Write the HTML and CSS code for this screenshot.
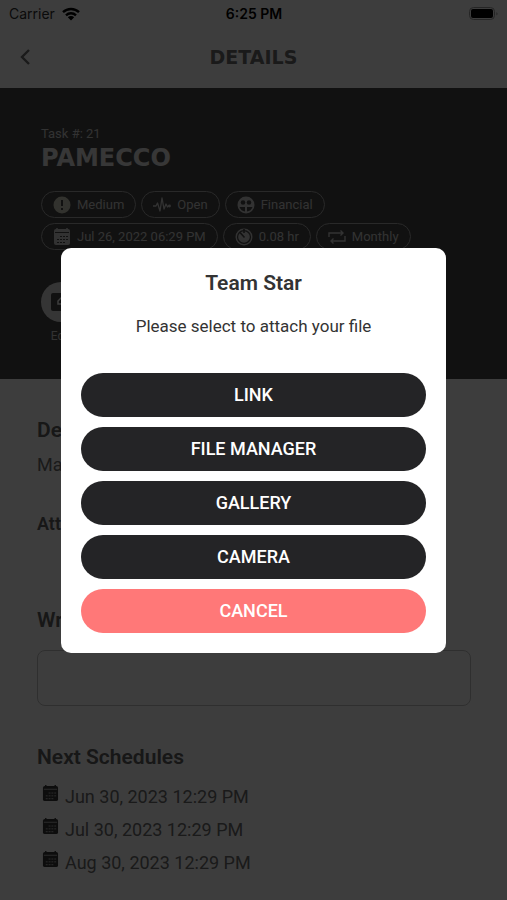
FILE: index.html
```
<!DOCTYPE html>
<html lang="en">
    <head>
        <meta charset="UTF-8" />
        <meta name="viewport" content="width=device-width, initial-scale=1.0" />
        <title>Details</title>
        <link rel="stylesheet" href="styles.css">
    </head>
    <body>
        <!-- Shared icons -->
        <svg class="sprite" width="0" height="0">
            <symbol id="calendar" viewBox="0 0 18 18">
                <path d="M3 1h12a2 2 0 0 1 2 2v12a2 2 0 0 1-2 2H3a2 2 0 0 1-2-2V3a2 2 0 0 1 2-2z" fill="currentColor" />
                <path d="M4 0v2M14 0v2" stroke="currentColor" stroke-width="1.500" />
                <path d="M2 4.500h14" class="icon-cut" />
                <path d="M7 8.500h8M4 11.500h11M4 14.500h8" class="icon-cut" stroke-dasharray="2 1" />
            </symbol>
        </svg>
        <!-- Status bar -->
        <div class="status">
            <div class="carrier">
                <span>Carrier</span>
                <svg width="18" height="14" viewBox="0 0 18 14">
                    <path d="M1 5.200a11.500 11.500 0 0 1 16 0M4 8.300a7.200 7.200 0 0 1 10 0" fill="none" stroke="currentColor" stroke-width="2.400" />
                    <path d="M5.800 10.200a4.600 4.600 0 0 1 6.400 0L9 13.500z" fill="currentColor" />
                </svg>
            </div>
            <span class="time">6:25 PM</span>
            <svg class="battery" width="30" height="14" viewBox="0 0 30 14">
                <rect x="0.500" y="0.500" width="25" height="12" rx="4" fill="none" stroke="#999" />
                <rect x="2" y="2" width="22" height="9" rx="2" fill="currentColor" />
                <path d="M27.500 5v3.500q2-1.700 0-3.500z" fill="#888" />
            </svg>
        </div>
        <!-- Top bar -->
        <header class="topbar">
            <button type="button" class="back" aria-label="Back">
                <svg width="12" height="18" viewBox="0 0 12 18">
                    <path d="M10 2L3 9l7 7" fill="none" stroke="currentColor" stroke-width="2.400" />
                </svg>
            </button>
            <h1>DETAILS</h1>
        </header>
        <!-- Task summary -->
        <section class="hero">
            <p class="task-number">Task #: 21</p>
            <h2 class="task-name">PAMECCO</h2>
            <div class="tags">
                <span class="tag">
                    <svg class="priority" width="18" height="18" viewBox="0 0 18 18">
                        <circle cx="9" cy="9" r="8.500" fill="currentColor" />
                        <path d="M9 4v6M9 12v2" class="icon-cut" stroke-width="2" />
                    </svg>
                    Medium
                </span>
                <span class="tag">
                    <svg width="18" height="18" viewBox="0 0 18 18">
                        <path d="M0 10h3l1.500-3L7 15 9 2l2 11 2-5 1.500 3 1.500-1.500" fill="none" stroke="currentColor" stroke-width="1.300" stroke-linejoin="round" />
                        <circle cx="16.500" cy="10" r="1.400" fill="currentColor" />
                    </svg>
                    Open
                </span>
                <span class="tag">
                    <svg width="18" height="18" viewBox="0 0 18 18">
                        <circle cx="9" cy="9" r="8.500" fill="currentColor" />
                        <circle cx="6" cy="6.500" r="2.300" class="icon-hole" />
                        <circle cx="12" cy="6.500" r="2.300" class="icon-hole" />
                        <path d="M2.500 11h5.500v4.500q-4-.5-5.500-4.500zM10 11h5.500q-1.500 4-5.500 4.500z" class="icon-hole" />
                    </svg>
                    Financial
                </span>
                <span class="tag">
                    <svg width="18" height="18"><use href="#calendar" /></svg>
                    Jul 26, 2022 06:29 PM
                </span>
                <span class="tag">
                    <svg width="18" height="18" viewBox="0 0 18 18">
                        <circle cx="9" cy="9" r="7.800" fill="none" stroke="currentColor" stroke-width="1.400" />
                        <circle cx="9" cy="9" r="5.800" fill="currentColor" />
                        <path d="M5 4.500l4.500 5M9 1v4" class="icon-cut" stroke-width="1.600" />
                    </svg>
                    0.08 hr
                </span>
                <span class="tag">
                    <svg width="18" height="18" viewBox="0 0 18 18">
                        <path d="M1 9V5h14M17 8v5H3M12.500 2.500L15 5l-2.500 2.500M5.500 10.500L3 13l2.500 2.500" fill="none" stroke="currentColor" stroke-width="1.400" />
                    </svg>
                    Monthly
                </span>
            </div>
            <button type="button" class="edit">
                <span class="edit-circle">
                    <svg width="20" height="18" viewBox="0 0 20 18">
                        <rect width="20" height="18" rx="2" fill="#474747" />
                        <path d="M7 11V8l6-6 3 3-6 6z" fill="none" stroke="#fff" stroke-width="1.500" />
                    </svg>
                </span>
                Edit
            </button>
        </section>
        <!-- Task details -->
        <main class="details">
            <h3>Description</h3>
            <p class="description">Main</p>
            <h4>Attachments</h4>
            <label for="comment">Write a comment</label>
            <input type="text" id="comment" name="comment" />
            <h3>Next Schedules</h3>
            <ul class="schedules">
                <li><svg width="17" height="17"><use href="#calendar" /></svg>Jun 30, 2023 12:29 PM</li>
                <li><svg width="17" height="17"><use href="#calendar" /></svg>Jul 30, 2023 12:29 PM</li>
                <li><svg width="17" height="17"><use href="#calendar" /></svg>Aug 30, 2023 12:29 PM</li>
            </ul>
        </main>
        <!-- Attach file dialog -->
        <div class="overlay">
            <div class="modal" role="dialog" aria-modal="true" aria-labelledby="modal-title">
                <h2 id="modal-title">Team Star</h2>
                <p>Please select to attach your file</p>
                <div class="actions">
                    <button type="button">LINK</button>
                    <button type="button">FILE MANAGER</button>
                    <button type="button">GALLERY</button>
                    <button type="button">CAMERA</button>
                    <button type="button" class="cancel">CANCEL</button>
                </div>
            </div>
        </div>
    </body>
</html>
```
FILE: styles.css
```
* {
    margin: 0;
    padding: 0;
    box-sizing: border-box;
}
body {
    --cut: #474747;
    background-color: white;
    color: #6c6c6c;
    font-family: Roboto, sans-serif;
    font-size: 18px;
    line-height: 24px;
}
button {
    border: none;
    background: none;
    color: inherit;
    font-family: inherit;
    cursor: pointer;
}
svg {
    flex-shrink: 0;
}
.sprite {
    position: absolute;
}
/* Lines and holes cut out of the solid icons */
.icon-cut {
    fill: none;
    stroke: var(--cut);
}
.icon-hole {
    fill: var(--cut);
}
/* Status bar */
.status {
    display: grid;
    grid-template-columns: 1fr auto 1fr;
    align-items: center;
    height: 28px;
    padding: 0 8px 0 9px;
    color: black;
    font-family: Inter, sans-serif;
    font-size: 14px;
}
.carrier {
    display: flex;
    align-items: center;
    gap: 7px;
    color: #303030;
}
.carrier svg {
    color: black;
}
.time {
    font-size: 14px;
    font-weight: 600;
}
.battery {
    justify-self: end;
}
/* Top bar */
.topbar {
    display: grid;
    grid-template-columns: 1fr auto 1fr;
    align-items: center;
    height: 60px;
    padding: 0 19px 3px;
}
.topbar h1 {
    font-family: "DejaVu Sans", sans-serif;
    font-size: 19px;
}
.back {
    justify-self: start;
    display: flex;
}
/* Task summary */
.hero {
    background-color: #474747;
    color: #d2d2d2;
    padding: 36px 41px;
    height: 291px;
}
.task-number {
    font-size: 13px;
    line-height: 20px;
}
.task-name {
    font-family: "DejaVu Sans", sans-serif;
    font-size: 24px;
    line-height: 28px;
    color: #e6e6e6;
}
.tags {
    display: flex;
    flex-wrap: wrap;
    gap: 5px;
    margin-top: 19px;
}
.tag {
    display: flex;
    align-items: center;
    gap: 6px;
    height: 27px;
    padding: 0 11px;
    border: 1px solid #aaa;
    border-radius: 14px;
    font-size: 13px;
}
.priority {
    color: #d2d2be;
}
.edit {
    display: flex;
    flex-direction: column;
    align-items: center;
    margin-top: 32px;
    font-size: 12px;
    line-height: 24px;
    gap: 2px;
}
.edit-circle {
    display: flex;
    align-items: center;
    justify-content: center;
    width: 40px;
    height: 40px;
    border-radius: 50%;
    background-color: #ddd;
}
/* Task details */
.details {
    padding: 39px 36px 20px 37px;
}
h3,
h4,
.details label {
    display: block;
    color: #606060;
    font-size: 21px;
    font-weight: 600;
}
.details h4 {
    margin: 35px 0 72px;
    font-size: 18px;
}
.description {
    margin-top: 11px;
}
.details input {
    display: block;
    width: 100%;
    height: 56px;
    margin: 18px 0 39px;
    padding: 0 12px;
    border: 1px solid #c4c4c4;
    border-radius: 8px;
    font-size: 18px;
}
.schedules {
    --cut: #bbb;
    list-style: none;
    margin-top: 16px;
    padding-left: 5px;
}
.schedules li {
    display: flex;
    gap: 6px;
    margin-bottom: 9px;
}
.schedules svg {
    color: #383838;
}
/* Dialog */
.overlay {
    position: fixed;
    inset: 0;
    display: flex;
    align-items: center;
    justify-content: center;
    background-color: rgba(0, 0, 0, 0.76);
}
.modal {
    width: 76%;
    padding: 23px 20px 20px;
    border-radius: 10px;
    background-color: white;
    color: #333;
    text-align: center;
}
.modal h2 {
    font-size: 21px;
    font-weight: 600;
}
.modal p {
    margin: 19px 0 35px;
    font-size: 17px;
}
.actions {
    display: flex;
    flex-direction: column;
    gap: 10px;
}
.actions button {
    height: 44px;
    border-radius: 22px;
    background-color: #242426;
    color: white;
    font-size: 18px;
    font-weight: 500;
}
.actions .cancel {
    background-color: #ff7878;
}
```
